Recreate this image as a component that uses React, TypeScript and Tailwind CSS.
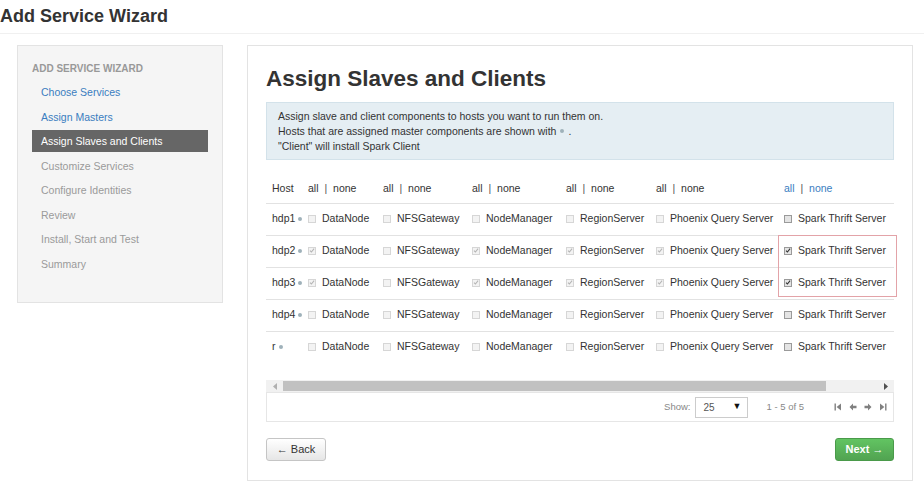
import React from "react";

// ---------------------------------------------------------------------------
// Data
// ---------------------------------------------------------------------------

const steps = [
  { label: "Choose Services", state: "done" },
  { label: "Assign Masters", state: "done" },
  { label: "Assign Slaves and Clients", state: "active" },
  { label: "Customize Services", state: "todo" },
  { label: "Configure Identities", state: "todo" },
  { label: "Review", state: "todo" },
  { label: "Install, Start and Test", state: "todo" },
  { label: "Summary", state: "todo" },
];

const components = [
  { name: "DataNode", width: "w-[75px]", enabled: false },
  { name: "NFSGateway", width: "w-[89px]", enabled: false },
  { name: "NodeManager", width: "w-[94px]", enabled: false },
  { name: "RegionServer", width: "w-[90px]", enabled: false },
  { name: "Phoenix Query Server", width: "w-[128px]", enabled: false },
  { name: "Spark Thrift Server", width: "w-[150px]", enabled: true },
];

// checked flags per host, in component order
const hosts = [
  { name: "hdp1", checked: [false, false, false, false, false, false] },
  { name: "hdp2", checked: [true, false, true, true, true, true] },
  { name: "hdp3", checked: [true, false, true, true, true, true] },
  { name: "hdp4", checked: [false, false, false, false, false, false] },
  { name: "r", checked: [false, false, false, false, false, false] },
];

// ---------------------------------------------------------------------------
// Small pieces
// ---------------------------------------------------------------------------

function Check({ checked, enabled }: { checked: boolean; enabled: boolean }) {
  return (
    <span
      className={`inline-flex h-[8px] w-[8px] shrink-0 items-center justify-center border ${
        enabled ? "border-[#9a9a9a] bg-[#e4e4e4]" : "border-[#d6d6d6] bg-[#f3f3f3]"
      }`}
    >
      {checked && (
        <svg width="7" height="7" viewBox="0 0 8 8">
          <path
            d="M1.3 4.2 L3.2 6 L6.8 1.6"
            fill="none"
            stroke={enabled ? "#333" : "#b5b5b5"}
            strokeWidth="1.5"
          />
        </svg>
      )}
    </span>
  );
}

function HostDot() {
  return <span className="ml-[3px] inline-block h-[4px] w-[4px] rounded-full bg-[#9fb1ba]" />;
}

function PagerIcon({ kind }: { kind: "first" | "prev" | "next" | "last" }) {
  return (
    <svg width="8" height="8" viewBox="0 0 8 8" fill="#808080">
      {kind === "first" && (
        <>
          <rect x="0.5" y="0.5" width="1.4" height="7" />
          <path d="M7 0.5 L2.6 4 L7 7.5 Z" />
        </>
      )}
      {kind === "prev" && (
        <path d="M0.5 4 L4 0.6 L4 2.8 L7.5 2.8 L7.5 5.2 L4 5.2 L4 7.4 Z" />
      )}
      {kind === "next" && (
        <path d="M7.5 4 L4 0.6 L4 2.8 L0.5 2.8 L0.5 5.2 L4 5.2 L4 7.4 Z" />
      )}
      {kind === "last" && (
        <>
          <rect x="6.1" y="0.5" width="1.4" height="7" />
          <path d="M1 0.5 L5.4 4 L1 7.5 Z" />
        </>
      )}
    </svg>
  );
}

// ---------------------------------------------------------------------------
// Component
// ---------------------------------------------------------------------------

export default function App() {
  return (
    <div className="h-[491px] w-[924px] overflow-hidden bg-white font-['Liberation_Sans',Arial,sans-serif] text-[#333]">
      {/* Page title */}
      <div className="h-[34px] border-b border-[#f0f0f0] pt-[5px]">
        <h1 className="text-[18px] font-bold leading-[22px] text-[#333]">Add Service Wizard</h1>
      </div>

      <div className="mt-[11px] flex items-start gap-[24px] pl-[17px]">
        {/* Sidebar */}
        <div className="h-[258px] w-[206px] border border-[#e3e3e3] bg-[#f5f5f5] px-[14px] pt-[16px]">
          <div className="h-[14px] text-[10px] font-bold uppercase leading-[14px] text-[#999]">
            Add Service Wizard
          </div>
          <ul className="mt-[5px] flex flex-col gap-[2.5px]">
            {steps.map((s) => (
              <li
                key={s.label}
                className={`h-[22px] pl-[9px] text-[10.5px] leading-[22px] ${
                  s.state === "active"
                    ? "bg-[#666] text-white"
                    : s.state === "done"
                    ? "text-[#3a7dc0]"
                    : "text-[#9a9a9a]"
                }`}
              >
                {s.label}
              </li>
            ))}
          </ul>
        </div>

        {/* Main panel */}
        <div className="h-[436px] w-[666px] border border-[#e3e3e3] bg-white px-[18px] pt-[20px]">
          <h2 className="h-[26px] text-[22.5px] font-bold leading-[26px] text-[#333]">
            Assign Slaves and Clients
          </h2>

          <div className="mt-[10px] border border-[#d3e2ea] bg-[#e5eef3] px-[11px] py-[5.5px] text-[10.5px] leading-[15px] text-[#333]">
            <div>Assign slave and client components to hosts you want to run them on.</div>
            <div className="flex items-center">
              Hosts that are assigned master components are shown with
              <span className="mx-[4px] inline-block h-[4px] w-[4px] rounded-full bg-[#9fb1ba]" />.
            </div>
            <div>"Client" will install Spark Client</div>
          </div>

          {/* Assignment table */}
          <div className="relative mt-[15px]">
            <div className="h-[205px] overflow-hidden">
              <table className="w-[662px] table-fixed border-collapse text-[10.5px] text-[#333]">
                <colgroup>
                  <col className="w-[36px]" />
                  {components.map((c) => (
                    <col key={c.name} className={c.width} />
                  ))}
                </colgroup>
                <thead>
                  <tr className="h-[28px]">
                    <th className="pl-[6px] text-left font-normal">Host</th>
                    {components.map((c) => (
                      <th
                        key={c.name}
                        className={`whitespace-nowrap pl-[6px] text-left font-normal ${
                          c.enabled ? "text-[#3a7dc0]" : "text-[#333]"
                        }`}
                      >
                        all <span className="mx-[3px] text-[#555]">|</span> none
                      </th>
                    ))}
                  </tr>
                </thead>
                <tbody>
                  {hosts.map((h) => (
                    <tr key={h.name} className="h-[32px] border-t border-[#e2e2e2]">
                      <td className="whitespace-nowrap pl-[6px]">
                        <span className="inline-flex items-center">
                          {h.name}
                          <HostDot />
                        </span>
                      </td>
                      {components.map((c, i) => (
                        <td key={c.name} className="whitespace-nowrap pl-[6px]">
                          <span className="inline-flex items-center gap-[6px]">
                            <Check checked={h.checked[i]} enabled={c.enabled} />
                            {c.name}
                          </span>
                        </td>
                      ))}
                    </tr>
                  ))}
                </tbody>
              </table>
            </div>

            {/* highlight annotation around Spark Thrift Server on hdp2/hdp3 */}
            <div className="pointer-events-none absolute left-[512px] top-[60px] h-[62px] w-[119px] border border-[#e3a3a8]" />
          </div>

          {/* Fake horizontal scrollbar */}
          <div className="flex h-[12px] items-center bg-[#f1f1f1]">
            <div className="flex w-[17px] justify-center">
              <svg width="4" height="7" viewBox="0 0 4 7">
                <path d="M4 0 L0 3.5 L4 7 Z" fill="#b0b0b0" />
              </svg>
            </div>
            <div className="h-[10px] w-[543px] bg-[#c1c1c1]" />
            <div className="flex-1" />
            <div className="flex w-[17px] justify-center">
              <svg width="4" height="7" viewBox="0 0 4 7">
                <path d="M0 0 L4 3.5 L0 7 Z" fill="#505050" />
              </svg>
            </div>
          </div>

          {/* Pagination */}
          <div className="flex h-[30px] items-center justify-end border border-[#e6e6e6] pr-[6px] text-[9.5px] text-[#888]">
            <span>Show:</span>
            <div className="ml-[4px] flex h-[21px] w-[53px] items-center justify-between border border-[#ccc] bg-white pl-[8px] pr-[5px] text-[10px] text-[#555]">
              <span>25</span>
              <span className="text-[9px] text-[#111]">▼</span>
            </div>
            <span className="ml-[19px]">1 - 5 of 5</span>
            <div className="ml-[30px] flex items-center gap-[7px]">
              <PagerIcon kind="first" />
              <PagerIcon kind="prev" />
              <PagerIcon kind="next" />
              <PagerIcon kind="last" />
            </div>
          </div>

          {/* Buttons */}
          <div className="mt-[16px] flex justify-between">
            <button
              type="button"
              className="h-[23px] w-[60px] rounded-[3px] border border-[#c5c5c5] bg-gradient-to-b from-white to-[#e6e6e6] text-[11px] text-[#333]"
            >
              ← Back
            </button>
            <button
              type="button"
              className="h-[23px] w-[59px] rounded-[3px] border border-[#4a9a4a] bg-gradient-to-b from-[#62c462] to-[#51a351] text-[11px] font-bold text-white"
            >
              Next →
            </button>
          </div>
        </div>
      </div>
    </div>
  );
}
